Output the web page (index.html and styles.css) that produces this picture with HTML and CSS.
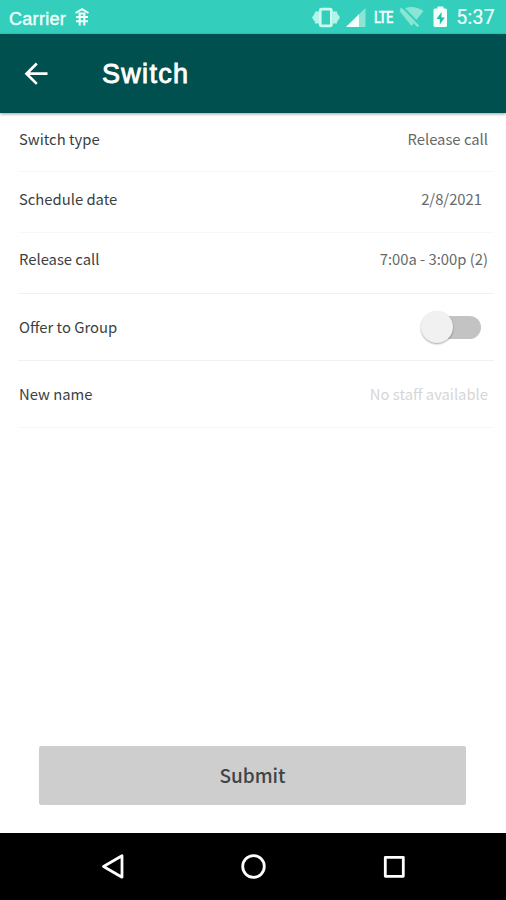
FILE: index.html
```html
<!DOCTYPE html>
<html lang="en">
<head>
<meta charset="utf-8">
<meta name="viewport" content="width=device-width, initial-scale=1">
<title>Switch</title>
<link rel="stylesheet" href="styles.css">
</head>
<body>
<div class="screen">
  <div class="status">
    <span class="carrier">Carrier</span>
    <svg class="debug" width="16" height="20" viewBox="0 0 16 20" fill="none" stroke="#f2fffc" stroke-width="2"><path d="M1.500 6 8 2.200 14.500 6M2 10h12M2 14.300h12M5.700 6v12.500M10.300 6v12.500M4.500 6.500h7"/></svg>
    <svg class="icons" width="140" height="34" viewBox="0 0 140 34">
      <g fill="#b4f3e7"><path d="M0 17.500 3 13v9zM28 17.500 25 13v9z"/><path d="M3 11.500h4v12H3zM21 11.500h4v12h-4z"/></g>
      <rect x="8.200" y="9.200" width="11.200" height="16.600" rx="1.500" fill="none" stroke="#c9faf0" stroke-width="2.800"/>
      <path d="M34 27 53.500 8v19z" fill="#8be5d5"/><path d="M34 27 47 14.300V27z" fill="#f2fffc"/>
      <path d="M87.500 11q12-8 24 0L99.500 26z" fill="#8be5d5"/><path d="m90 6.500 19 19.500" stroke="#33cfbc" stroke-width="2"/><path d="m88.500 8.500 18 18" stroke="#8be5d5" stroke-width="2.400"/>
      <path d="M125.500 6.500h6v2h2q1.500 0 1.500 1.500v15.500q0 1.500-1.500 1.500h-10.500q-1.500 0-1.500-1.500V10q0-1.500 1.500-1.500h2.500z" fill="#f2fffc"/><path d="m129.500 12-5 7h3.300V24.500l5-7h-3.300z" fill="#26bda9"/>
    </svg>
    <span class="lte">LTE</span>
    <span class="time">5:37</span>
  </div>
  <header class="bar">
    <svg class="back" width="24" height="24" viewBox="0 0 24 24" fill="none" stroke="#fff" stroke-width="2.700"><path d="M23.500 11.700H3M12.800 1.500 2.500 11.700l10.300 10.200"/></svg>
    <h1 class="title">Switch</h1>
  </header>
  <main class="form">
    <div class="row first"><span class="label">Switch type</span><span class="value">Release call</span></div>
    <div class="row"><span class="label">Schedule date</span><span class="value date">2/8/2021</span></div>
    <div class="row strong third"><span class="label">Release call</span><span class="value">7:00a - 3:00p (2)</span></div>
    <div class="row tall strong"><span class="label">Offer to Group</span><span class="toggle"><span class="knob"></span></span></div>
    <div class="row tall"><span class="label">New name</span><span class="value empty">No staff available</span></div>
  </main>
  <button class="submit" type="button">Submit</button>
  <nav class="nav">
    <svg width="506" height="67" viewBox="0 0 506 67" fill="none" stroke="#fff" stroke-width="2.800" stroke-linejoin="round"><path d="M122 22.800v21.400L103.500 33.500z"/><circle cx="253.500" cy="33.500" r="10.800"/><rect x="385.300" y="24.300" width="18" height="19"/></svg>
  </nav>
</div>
</body>
</html>
```
FILE: styles.css
```css
* { box-sizing: border-box; }
body { margin: 0; background: #fff; }
.screen {
  width: 506px;
  height: 900px;
  display: flex;
  flex-direction: column;
  overflow: hidden;
  font-family: "Noto Sans CJK SC", "Noto Sans", sans-serif;
  color: #3b4142;
}
.status {
  position: relative;
  height: 34px;
  flex: none;
  display: flex;
  align-items: center;
  padding: 3px 11px 0 9px;
  background: #33cfbc;
  color: #f2fffc;
  font-family: "Liberation Sans", sans-serif;
}
.carrier { font-size: 18px; line-height: 20px; width: 65px; padding-top: 1px; letter-spacing: .3px; white-space: nowrap; -webkit-text-stroke: 0.4px; }
.debug { margin-top: -3px; }
.icons { position: absolute; left: 312px; top: 0; }
.lte {
  position: absolute;
  left: 374px;
  top: 8px;
  font: 500 17px/19px Roboto, sans-serif;
  letter-spacing: -.8px;
  transform: scaleX(.76);
  transform-origin: left;
  -webkit-text-stroke: 0.4px;
}
.time { margin-left: auto; font: 400 19.500px/22px Roboto, sans-serif; letter-spacing: .3px; margin-top: -2px; -webkit-text-stroke: 0.2px; }
.bar {
  position: relative;
  height: 79px;
  flex: none;
  display: flex;
  align-items: center;
  padding-left: 24px;
  background: #00504f;
  box-shadow: 0 1px 3px rgba(0, 0, 0, .4);
}
.title {
  margin: 0 0 0 54px;
  color: #fff;
  font: 400 27px/32px "Liberation Sans", sans-serif;
  letter-spacing: 1.3px;
  -webkit-text-stroke: 0.9px;
}
.form { padding: 0 12px 0 18px; flex: 1; }
.row {
  height: 61px;
  display: flex;
  justify-content: space-between;
  align-items: center;
  padding: 0 6px 7px 1px;
  border-bottom: 1px solid #f8f8f8;
}
.first { height: 59px; padding-bottom: 6px; }
.strong { border-color: #f0f0f0; }
.third { padding-bottom: 9px; }
.tall { height: 67px; padding-bottom: 0; }
.label, .value { font-size: 14.800px; line-height: 22px; white-space: nowrap; }
.value { color: #66696a; }
.date { margin-right: 6px; }
.empty { color: #d6d6d6; }
.toggle {
  position: relative;
  width: 54px;
  height: 23px;
  margin-right: 7px;
  border-radius: 12px;
  background: #c3c3c3;
}
.knob {
  position: absolute;
  left: -6px;
  top: -5px;
  width: 32px;
  height: 32px;
  border-radius: 50%;
  background: #f1f1f1;
  box-shadow: 0 1px 2px rgba(0, 0, 0, .35);
}
.submit {
  width: 427px;
  height: 59px;
  margin: 0 0 28px 39px;
  flex: none;
  border: 0;
  border-radius: 2px;
  padding: 0 0 1px;
  background: #cecece;
  color: #404446;
  font: 500 19px/28px "Noto Sans CJK SC", sans-serif;
}
.nav { height: 67px; flex: none; background: #000; }
.nav svg { display: block; }
```
